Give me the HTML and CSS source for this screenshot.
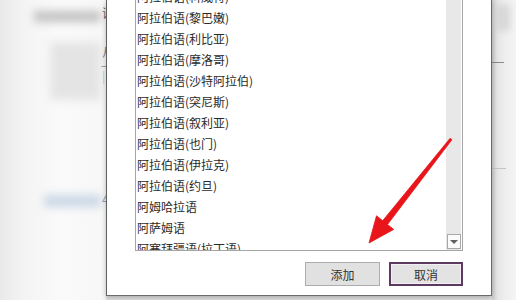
FILE: index.html
```html
<!DOCTYPE html>
<html lang="zh-CN">
<head>
<meta charset="utf-8">
<link rel="stylesheet" href="styles.css">
</head>
<body>
<div class="under">
  <div class="under-blur">
    <div class="blur-title"></div>
    <div class="blur-box"></div>
    <div class="blur-link"></div>
  </div>
  <div class="under-edge">
    <span class="frag f1">语</span>
    <span class="frag f2">从</span>
    <span class="frag-line"></span>
    <span class="frag f3">|</span>
    <span class="frag f4">4</span>
  </div>
</div>
<div class="dialog">
  <div class="listbox">
    <ul class="items">
      <li>阿拉伯语(科威特)</li>
      <li>阿拉伯语(黎巴嫩)</li>
      <li>阿拉伯语(利比亚)</li>
      <li>阿拉伯语(摩洛哥)</li>
      <li>阿拉伯语(沙特阿拉伯)</li>
      <li>阿拉伯语(突尼斯)</li>
      <li>阿拉伯语(叙利亚)</li>
      <li>阿拉伯语(也门)</li>
      <li>阿拉伯语(伊拉克)</li>
      <li>阿拉伯语(约旦)</li>
      <li>阿姆哈拉语</li>
      <li>阿萨姆语</li>
      <li>阿塞拜疆语(拉丁语)</li>
    </ul>
    <div class="scrollbar">
      <div class="scroll-down"><span class="tri"></span></div>
    </div>
  </div>
  <div class="buttons">
    <button class="btn">添加</button>
    <button class="btn btn-default">取消</button>
  </div>
</div>
<div class="side">
  <div class="side-top"></div>
  <div class="side-line"></div>
  <div class="side-line2"></div>
</div>
<svg class="arrow" width="516" height="300" viewBox="0 0 516 300">
  <polygon fill="#e8151b" stroke="#e8151b" stroke-width="0.8" stroke-linejoin="round"
    points="451.9,139.7 387.5,224.5 393.7,229.4 369,243 376.5,215.8 382.7,220.7 450.1,138.3"/>
</svg>
</body>
</html>
```
FILE: styles.css
```css
* { box-sizing: border-box; }
html, body { margin: 0; padding: 0; }
body {
  width: 516px;
  height: 300px;
  overflow: hidden;
  position: relative;
  display: flex;
  background: #e4e4e4;
  font-family: "Noto Sans CJK SC", "Microsoft YaHei", sans-serif;
  font-size: 12px;
  color: #2b2b2b;
}
.under {
  width: 106px;
  height: 300px;
  flex: none;
  display: flex;
  background: linear-gradient(to right, #e9e9e9 0, #f4f4f4 25px, #fafafa 60px, #f7f7f7 106px);
}
.under-blur {
  flex: 1;
  display: flex;
  flex-direction: column;
}
.blur-title {
  margin: 11px 0 0 34px;
  height: 11px;
  background: #c2c2c2;
  filter: blur(4px);
}
.blur-box {
  margin: 20px 0 0 50px;
  height: 58px;
  background: #e4e4e4;
  filter: blur(5px);
}
.blur-link {
  margin: 95px 0 0 44px;
  height: 12px;
  background: #cbd8e6;
  filter: blur(4px);
}
.under-edge {
  width: 5px;
  overflow: hidden;
  display: flex;
  flex-direction: column;
  padding-left: 1px;
  line-height: 12px;
}
.frag { display: block; width: 14px; color: #555; }
.f1 { margin-top: 7px; }
.f2 { margin-top: 27px; color: #666; }
.frag-line { display: block; height: 1px; margin-top: 8px; background: #888; width: 10px; margin-left: -2px; }
.f3 { margin-top: 3px; color: #bbb; }
.f4 { margin-top: 111px; color: #7c93ad; }
.dialog {
  width: 386px;
  height: 296px;
  flex: none;
  background: #fff;
  border-left: 1px solid #5f5f5f;
  border-right: 1px solid #6a6a6a;
  border-bottom: 1px solid #6a6a6a;
  box-shadow: 0 2px 5px rgba(0,0,0,0.25);
  padding: 0 28px;
  display: flex;
  flex-direction: column;
  position: relative;
  z-index: 1;
}
.listbox {
  margin-top: -15px;
  height: 266px;
  border: 1px solid #a5a5a5;
  display: flex;
  overflow: hidden;
}
.items {
  flex: 1;
  list-style: none;
  margin: 0;
  padding: 0 0 0 1px;
  overflow: hidden;
}
.items li {
  height: 21px;
  line-height: 21px;
  white-space: nowrap;
}
.scrollbar {
  width: 15px;
  margin-right: 1px;
  background: #e8e8e8;
  display: flex;
  flex-direction: column;
  justify-content: flex-end;
  padding-bottom: 1px;
}
.scroll-down {
  height: 15px;
  margin: 0 0 0 1px;
  background: #fbfbfb;
  border: 1px solid #a8a8a8;
  display: flex;
  align-items: center;
  justify-content: center;
}
.tri {
  width: 0;
  height: 0;
  border-left: 4px solid transparent;
  border-right: 4px solid transparent;
  border-top: 4px solid #606060;
}
.buttons {
  margin-top: 11px;
  display: flex;
  justify-content: flex-end;
  gap: 9px;
}
.btn {
  width: 75px;
  height: 24px;
  font-family: inherit;
  font-size: 12px;
  color: #333;
  background: #e1e1e1;
  border: 1px solid #adadad;
  padding: 0;
  margin: 0;
}
.btn-default {
  width: 74px;
  border: 2px solid #5c3a60;
  box-shadow: inset 0 0 0 1px #f3eef4;
  background: #e3e3e3;
}
.side {
  flex: 1;
  height: 300px;
  display: flex;
  flex-direction: column;
  background: linear-gradient(to right, #cfcfcf 0, #e6e6e6 6px, #efefef 14px, #f4f4f4 24px);
}
.side-top {
  margin-top: 5px;
  height: 26px;
  background: #d8d8d8;
  filter: blur(3px);
  margin-right: 6px;
}
.side-line {
  margin-top: 31px;
  height: 1px;
  width: 12px;
  background: #8a8a8a;
}
.side-line2 {
  margin-top: 105px;
  height: 1px;
  width: 14px;
  background: #c4c4c4;
}
.arrow {
  position: absolute;
  left: 0;
  top: 0;
  z-index: 2;
}
```
